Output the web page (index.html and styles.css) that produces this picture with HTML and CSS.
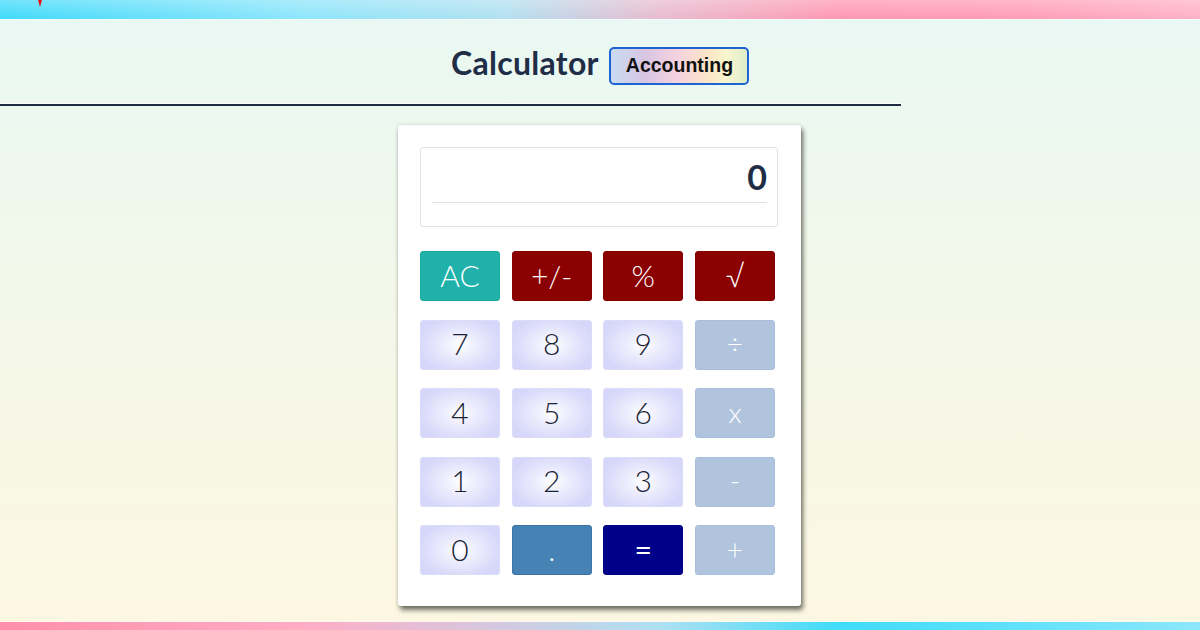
FILE: index.html
```html
<!DOCTYPE html>
<html lang="en">
<head>
<meta charset="utf-8">
<title>Calculator</title>
<link rel="stylesheet" href="styles.css">
</head>
<body>
<div class="topbar"><span class="marker"></span></div>
<main class="page">
  <header class="header">
    <h1 class="title">Calculator</h1>
    <span class="badge">Accounting</span>
  </header>
  <hr class="rule">
  <section class="calc">
    <div class="display">
      <div class="screen">0</div>
    </div>
    <div class="keys">
      <button class="key clear">AC</button>
      <button class="key fn">+/-</button>
      <button class="key fn">%</button>
      <button class="key fn">√</button>
      <button class="key num">7</button>
      <button class="key num">8</button>
      <button class="key num">9</button>
      <button class="key op">÷</button>
      <button class="key num">4</button>
      <button class="key num">5</button>
      <button class="key num">6</button>
      <button class="key op">x</button>
      <button class="key num">1</button>
      <button class="key num">2</button>
      <button class="key num">3</button>
      <button class="key op">-</button>
      <button class="key num">0</button>
      <button class="key dot">.</button>
      <button class="key eq">=</button>
      <button class="key op">+</button>
    </div>
  </section>
</main>
<div class="bottombar"></div>
</body>
</html>
```

FILE: styles.css
```css
* { box-sizing: border-box; }
html, body { margin: 0; padding: 0; }
body {
  width: 1200px;
  height: 630px;
  overflow: hidden;
  display: flex;
  flex-direction: column;
  font-family: Lato, "Noto Sans", sans-serif;
  background: linear-gradient(to bottom, #e8f8f4 0%, #f3f8ea 45%, #fdf7e2 100%);
}
.topbar {
  position: relative;
  height: 20px;
  flex: none;
  background:
    linear-gradient(to bottom, rgba(255,255,255,0.25), rgba(255,255,255,0) 90%),
    linear-gradient(to right, #44dbfb 0%, #8fe6fb 25%, #b3e1f1 42%, #e9bdd0 55%, #ff9ab4 70%, #ff9fb8 85%, #ffb3c8 100%);
  border-bottom: 1px solid #f2fbfb;
}
.marker {
  position: absolute;
  left: 38px;
  top: 0;
  width: 0;
  height: 0;
  border-left: 2px solid transparent;
  border-right: 2px solid transparent;
  border-top: 7px solid #f01010;
}
.page {
  flex: 1;
  display: flex;
  flex-direction: column;
}
.header {
  display: flex;
  align-items: center;
  justify-content: center;
  gap: 10px;
  height: 84px;
  padding-top: 1px;
}
.title {
  margin: 0;
  font-family: Lato, "Noto Sans", sans-serif;
  font-weight: 700;
  font-size: 32px;
  color: #1f2e46;
  letter-spacing: 0.3px;
}
.badge {
  display: inline-flex;
  align-items: center;
  height: 38px;
  padding: 0 14px 0 15px;
  margin-top: 6px;
  border: 2px solid #1e63d2;
  border-radius: 5px;
  font-family: "Liberation Sans", Arial, sans-serif;
  font-weight: 700;
  font-size: 19.5px;
  color: #111;
  background: linear-gradient(to right, #c9dcf2 0%, #d8c5e3 25%, #f6d3df 50%, #fbe6c6 72%, #f8f6cf 85%, #dcecc9 100%);
}
.rule {
  margin: 0;
  width: 901px;
  height: 2px;
  border: 0;
  background: #1e2c44;
  box-shadow: 0 -1px 0 #ffffff;
}
.calc {
  align-self: center;
  margin-top: 19px;
  margin-left: -1px;
  width: 403px;
  background: #fff;
  border-radius: 3px;
  padding: 22px 23px 31px 22px;
  box-shadow: 2px 4px 5px rgba(40, 40, 30, 0.65), 0 0 4px rgba(0,0,0,0.12);
}
.display {
  height: 80px;
  border: 1px solid #e2e2e2;
  border-radius: 3px;
  padding: 10px 10px 0 11px;
}
.screen {
  height: 45px;
  border-bottom: 1px solid #e0e0e0;
  text-align: right;
  font-family: Lato, "Noto Sans", sans-serif;
  font-weight: 700;
  font-size: 34px;
  line-height: 38px;
  color: #1f2e46;
}
.keys {
  margin-top: 24px;
  width: 355px;
  display: grid;
  grid-template-columns: repeat(4, 80px);
  grid-auto-rows: 50px;
  column-gap: 11.67px;
  row-gap: 18.5px;
}
.key {
  margin: 0;
  padding: 0 0 3px;
  border: 1px solid transparent;
  border-radius: 3px;
  font-family: Lato, "Noto Sans", sans-serif;
  font-weight: 300;
  font-size: 30px;
  line-height: 1;
  color: #fff;
  display: flex;
  align-items: center;
  justify-content: center;
}
.clear { background: #20b2aa; border-color: #1fa9a1; }
.fn { background: #8b0000; border-color: #850000; }
.num {
  color: #1a2436;
  background: radial-gradient(ellipse 55% 60% at 50% 50%, #ffffff 0%, #ececfd 40%, #d6d6fa 100%);
  border-color: #dcdcf6;
}
.op {
  background: #b0c4de;
  border-color: #a9bedc;
  font-size: 28px;
}
.dot { background: #4682b4; border-color: #3a74a8; }
.eq { background: #00008b; border-color: #000080; font-weight: 400; }
.bottombar {
  height: 9px;
  flex: none;
  background: linear-gradient(to right, #ff8fab 0%, #ffacc4 25%, #d8c6de 40%, #ade0f1 55%, #40dcf9 70%, #62e1fb 85%, #8de7fb 100%);
  border-top: 1px solid #fff8f0;
}
```
